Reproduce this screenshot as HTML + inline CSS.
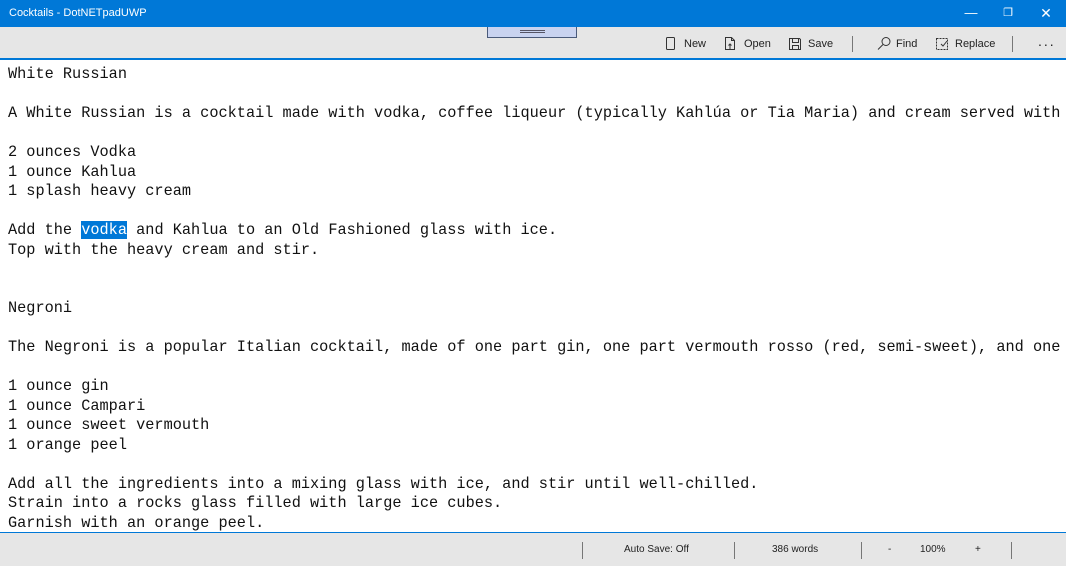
<!DOCTYPE html>
<html><head><style>
*{margin:0;padding:0;box-sizing:border-box}
body{width:1066px;height:566px;overflow:hidden;background:#fff;font-family:"Segoe UI","Liberation Sans",sans-serif;position:relative}
.title{position:absolute;left:0;top:0;width:1066px;height:27px;background:#0078d7;color:#fff;font-size:11px;line-height:26px;padding-left:9px}
.wc{position:absolute;top:0;height:27px;width:34px;color:#fff;text-align:center;line-height:26px;font-size:13px}
.tb{position:absolute;left:0;top:27px;width:1066px;height:33px;background:#e6e6e6;border-bottom:2px solid #0078d7}
.grip{position:absolute;left:487px;top:27px;width:90px;height:11px;background:#c9d3f0;border:1px solid #4a5a7a;border-top:none}
.grip i{position:absolute;left:32px;top:3px;width:25px;height:3px;border-top:1px solid #556;border-bottom:1px solid #556}
.btn{position:absolute;top:37px;font-size:11px;color:#222;line-height:14px}
.sep{position:absolute;width:1px;background:#777}
.ed{position:absolute;left:8px;top:65px;font-family:"Liberation Mono",monospace;font-size:15.25px;line-height:19.5px;white-space:pre;color:#111}
.sel{background:#0078d7;color:#fff}
.sb{position:absolute;left:0;top:532px;width:1066px;height:34px;background:#e6e6e6;border-top:1px solid #0078d7}
.st{position:absolute;top:544px;font-size:10px;color:#222}
</style></head><body>
<div class="title">Cocktails - DotNETpadUWP</div>
<div class="wc" style="left:954px">&#8212;</div>
<div class="wc" style="left:991px;font-size:11px">&#10064;</div>
<div class="wc" style="left:1029px;font-size:14px">&#10005;</div>
<div class="tb"></div>
<div class="grip"><i></i></div>
<svg style="position:absolute;left:664px;top:36px" width="400" height="16" fill="none" stroke="#333" stroke-width="1">
<rect x="2.5" y="1.5" width="8" height="12" rx="1"/>
<path d="M61.5 1.5h6l3 3v9h-9z M67.5 1.5v3h3 M66 13v-5 M64.5 9.5l1.5-1.5 1.5 1.5"/>
<path d="M125.5 2.5h10l1 1v10h-11z M128.5 2.5v4h6v-4 M128.5 13.5v-4h6v4"/>
<circle cx="222" cy="5.5" r="4"/><path d="M219 8.5l-5 5"/>
<path d="M272.5 2.5h11v11h-11z" stroke-dasharray="2 1"/><path d="M277 8l2 2 4-5"/>
</svg>
<div class="btn" style="left:684px">New</div>
<div class="btn" style="left:744px">Open</div>
<div class="btn" style="left:808px">Save</div>
<div class="sep" style="left:852px;top:36px;height:16px"></div>
<div class="btn" style="left:896px">Find</div>
<div class="btn" style="left:955px">Replace</div>
<div class="sep" style="left:1012px;top:36px;height:16px"></div>
<div class="btn" style="left:1038px;font-size:14px;top:34px;letter-spacing:2px">...</div>
<div class="ed">White Russian

A White Russian is a cocktail made with vodka, coffee liqueur (typically Kahlúa or Tia Maria) and cream served with

2 ounces Vodka
1 ounce Kahlua
1 splash heavy cream

Add the <span class="sel">vodka</span> and Kahlua to an Old Fashioned glass with ice.
Top with the heavy cream and stir.


Negroni

The Negroni is a popular Italian cocktail, made of one part gin, one part vermouth rosso (red, semi-sweet), and one

1 ounce gin
1 ounce Campari
1 ounce sweet vermouth
1 orange peel

Add all the ingredients into a mixing glass with ice, and stir until well-chilled.
Strain into a rocks glass filled with large ice cubes.
Garnish with an orange peel.</div>
<div class="sb"></div>
<div class="sep" style="left:582px;top:542px;height:17px"></div>
<div class="st" style="left:624px">Auto Save: Off</div>
<div class="sep" style="left:734px;top:542px;height:17px"></div>
<div class="st" style="left:772px">386 words</div>
<div class="sep" style="left:861px;top:542px;height:17px"></div>
<div class="st" style="left:888px">-</div>
<div class="st" style="left:920px">100%</div>
<div class="st" style="left:975px">+</div>
<div class="sep" style="left:1011px;top:542px;height:17px"></div>
</body></html>
